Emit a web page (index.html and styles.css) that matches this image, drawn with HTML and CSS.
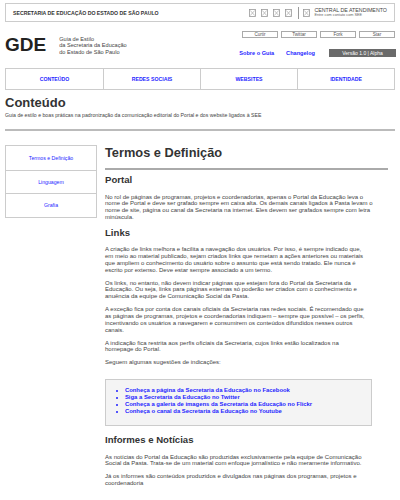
FILE: index.html
```html
<!DOCTYPE html>
<html lang="pt-BR">
<head>
<meta charset="utf-8">
<title>GDE - Guia de Estilo</title>
<link rel="stylesheet" href="styles.css">
</head>
<body>
<div class="page">
  <header class="topbar">
    <span class="org">SECRETARIA DE EDUCAÇÃO DO ESTADO DE SÃO PAULO</span>
    <div class="tools">
      <svg class="ico" viewBox="0 0 7 8"><rect x="0.5" y="0.5" width="6" height="7" fill="none" stroke="#999" stroke-width="0.8"/><path d="M1.2 1.4 L5.8 6.6 M5.8 1.4 L1.2 6.6" stroke="#aaa" stroke-width="0.7"/></svg>
      <svg class="ico" viewBox="0 0 7 8"><rect x="0.5" y="0.5" width="6" height="7" fill="none" stroke="#999" stroke-width="0.8"/><path d="M1.2 1.4 L5.8 6.6 M5.8 1.4 L1.2 6.6" stroke="#aaa" stroke-width="0.7"/></svg>
      <svg class="ico" viewBox="0 0 7 8"><rect x="0.5" y="0.5" width="6" height="7" fill="none" stroke="#999" stroke-width="0.8"/><path d="M1.2 1.4 L5.8 6.6 M5.8 1.4 L1.2 6.6" stroke="#aaa" stroke-width="0.7"/></svg>
      <svg class="ico" viewBox="0 0 7 8"><rect x="0.5" y="0.5" width="6" height="7" fill="none" stroke="#999" stroke-width="0.8"/><path d="M1.2 1.4 L5.8 6.6 M5.8 1.4 L1.2 6.6" stroke="#aaa" stroke-width="0.7"/></svg>
      <span class="sep"></span>
      <svg class="ico" viewBox="0 0 7 8"><rect x="0.5" y="0.5" width="6" height="7" fill="none" stroke="#999" stroke-width="0.8"/><path d="M1.2 1.4 L5.8 6.6 M5.8 1.4 L1.2 6.6" stroke="#aaa" stroke-width="0.7"/></svg>
      <div class="central">
        <span class="central-title">CENTRAL DE ATENDIMENTO</span>
        <span class="central-sub">Entre com contato com SEE</span>
      </div>
    </div>
  </header>

  <div class="brand-row">
    <div class="brand">
      <span class="logo">GDE</span>
      <span class="tagline">Guia de Estilo<br>da Secretaria da Educação<br>do Estado de São Paulo</span>
    </div>
    <div class="actions">
      <div class="buttons">
        <span class="btn">Curtir</span>
        <span class="btn">Twittar</span>
        <span class="btn">Fork</span>
        <span class="btn">Star</span>
      </div>
      <div class="meta">
        <a class="meta-link" href="#">Sobre o Guia</a>
        <a class="meta-link" href="#">Changelog</a>
        <span class="version">Versão 1.0 | Alpha</span>
      </div>
    </div>
  </div>

  <nav class="menu">
    <a href="#">CONTEÚDO</a>
    <a href="#">REDES SOCIAIS</a>
    <a href="#">WEBSITES</a>
    <a href="#">IDENTIDADE</a>
  </nav>

  <div class="title">
    <h1 class="page-title">Conteúdo</h1>
    <p class="subtitle">Guia de estilo e boas práticas na padronização da comunicação editorial do Portal e dos website ligados à SEE</p>
  </div>
  <hr class="rule">

  <div class="layout">
    <aside class="sidenav">
      <a href="#">Termos e Definição</a>
      <a href="#">Linguagem</a>
      <a href="#">Grafia</a>
    </aside>
    <main class="content">
      <h2 class="section-title">Termos e Definição</h2>
      <h3 class="first">Portal</h3>
      <p>No rol de páginas de programas, projetos e coordenadorias, apenas o Portal da Educação leva o<br>nome de Portal e deve ser grafado sempre em caixa alta. Os demais canais ligados à Pasta levam o<br>nome de site, página ou canal da Secretaria na internet. Eles devem ser grafados sempre com letra<br>minúscula.</p>
      <h3>Links</h3>
      <p>A criação de links melhora e facilita a navegação dos usuários. Por isso, é sempre indicado que,<br>em meio ao material publicado, sejam criados links que remetam a ações anteriores ou materiais<br>que ampliem o conhecimento do usuário sobre o assunto que está sendo tratado. Ele nunca é<br>escrito por extenso. Deve estar sempre associado a um termo.</p>
      <p>Os links, no entanto, não devem indicar páginas que estejam fora do Portal da Secretaria da<br>Educação. Ou seja, links para páginas externas só poderão ser criados com o conhecimento e<br>anuência da equipe de Comunicação Social da Pasta.</p>
      <p>A exceção fica por conta dos canais oficiais da Secretaria nas redes sociais. É recomendado que<br>as páginas de programas, projetos e coordenadorias indiquem – sempre que possível – os perfis,<br>incentivando os usuários a navegarem e consumirem os conteúdos difundidos nesses outros<br>canais.</p>
      <p>A indicação fica restrita aos perfis oficiais da Secretaria, cujos links estão localizados na<br>homepage do Portal.</p>
      <p>Seguem algumas sugestões de indicações:</p>
      <div class="linkbox">
        <ul>
          <li><a href="#">Conheça a página da Secretaria da Educação no Facebook</a></li>
          <li><a href="#">Siga a Secretaria da Educação no Twitter</a></li>
          <li><a href="#">Conheça a galeria de imagens da Secretaria da Educação no Flickr</a></li>
          <li><a href="#">Conheça o canal da Secretaria da Educação no Youtube</a></li>
        </ul>
      </div>
      <h3 class="after-box">Informes e Notícias</h3>
      <p>As notícias do Portal da Educação são produzidas exclusivamente pela equipe de Comunicação<br>Social da Pasta. Trata-se de um material com enfoque jornalístico e não meramente informativo.</p>
      <p>Já os informes são conteúdos produzidos e divulgados nas páginas dos programas, projetos e<br>coordenadoria</p>
    </main>
  </div>
</div>
</body>
</html>
```

FILE: styles.css
```css
* { box-sizing: border-box; }

html, body {
  margin: 0;
  padding: 0;
  background: #fff;
}

body {
  font-family: "Liberation Sans", Arial, sans-serif;
  color: #333;
}

a { text-decoration: none; color: #1f1fff; }

.page {
  padding: 3px 5px 0 5px;
}

/* top bar */
.topbar {
  height: 19px;
  border: 1px solid #ccc;
  display: flex;
  align-items: center;
  justify-content: space-between;
  padding: 0 7px 0 7px;
}

.org {
  font-size: 5.2px;
  font-weight: bold;
  color: #333;
}

.tools {
  display: flex;
  align-items: center;
}

.ico {
  width: 7px;
  height: 8px;
  margin-left: 5px;
  display: block;
}

.sep {
  width: 1px;
  height: 12px;
  background: #999;
  margin-left: 6px;
  margin-right: -1px;
}

.central {
  display: flex;
  flex-direction: column;
  margin-left: 4px;
  line-height: 4.6px;
  color: #444;
}

.central-title { font-size: 5.3px; }
.central-sub { font-size: 3.8px; color: #666; }

/* brand row */
.brand-row {
  display: flex;
  justify-content: space-between;
  align-items: flex-start;
  margin-top: 9px;
}

.brand {
  display: flex;
  align-items: flex-start;
  padding-top: 4px;
}

.logo {
  font-size: 19px;
  font-weight: bold;
  line-height: 19px;
  color: #222;
}

.tagline {
  font-size: 5.6px;
  line-height: 6.5px;
  color: #444;
  margin-left: 13px;
  margin-top: 0.5px;
}

.actions {
  display: flex;
  flex-direction: column;
  align-items: flex-end;
}

.buttons {
  display: flex;
  gap: 3px;
}

.btn {
  width: 36px;
  height: 7px;
  border: 1px solid #aaa;
  font-size: 4.6px;
  line-height: 5px;
  text-align: center;
  color: #555;
}

.meta {
  display: flex;
  align-items: center;
  margin-top: 11px;
}

.meta-link {
  font-size: 5.6px;
  font-weight: bold;
  margin-right: 12px;
}

.version {
  width: 67px;
  height: 8px;
  background: #6a6a6a;
  color: #fff;
  font-size: 5px;
  line-height: 8px;
  text-align: center;
  margin-left: 2px;
  margin-right: -1px;
}

/* menu */
.menu {
  display: grid;
  grid-template-columns: repeat(4, 1fr);
  height: 22px;
  border: 1px solid #ccc;
  margin-top: 11px;
}

.menu a {
  display: flex;
  align-items: center;
  justify-content: center;
  font-size: 5.2px;
  font-weight: bold;
  border-left: 1px solid #ccc;
}

.menu a:first-child { border-left: none; }

/* title */
.title {
  margin-top: 5px;
}

.page-title {
  margin: 0;
  font-size: 13px;
  line-height: 15px;
  color: #333;
}

.subtitle {
  margin: 2px 0 0 0;
  font-size: 5.2px;
  line-height: 6px;
  color: #444;
}

.rule {
  margin: 11px 0 0 0;
  border: none;
  height: 2px;
  background: #bbb;
}

/* body layout */
.layout {
  display: grid;
  grid-template-columns: 92px 283px;
  column-gap: 8px;
  margin-top: 14px;
}

.sidenav {
  align-self: start;
  border: 1px solid #ccc;
  display: flex;
  flex-direction: column;
}

.sidenav a {
  height: 23.5px;
  display: flex;
  align-items: center;
  justify-content: center;
  font-size: 5.2px;
  border-top: 1px solid #ccc;
}

.sidenav a:first-child { border-top: none; }

.content {
  color: #444;
}

.section-title {
  margin: 0;
  font-size: 12.8px;
  line-height: 15px;
  color: #333;
  padding-bottom: 8px;
  border-bottom: 2px solid #aaa;
}

.content h3 {
  margin: 6px 0 0 0;
  font-size: 9.6px;
  line-height: 11px;
  color: #333;
}

.content h3.first { margin-top: 4px; }

.content p {
  margin: 6.2px 0 0 0;
  font-size: 6px;
  line-height: 6.8px;
  white-space: nowrap;
}

.content h3 + p { margin-top: 8.5px; }

.linkbox {
  width: 267px;
  margin-top: 13px;
  border: 1px solid #ccc;
  background: #f4f4f4;
  padding: 7px 0 10px 10px;
}

.content h3.after-box { margin-top: 8px; }

.linkbox ul {
  margin: 0;
  padding: 0;
  list-style: disc inside;
  color: #1f1fff;
}

.linkbox li {
  font-size: 5.9px;
  line-height: 7px;
  font-weight: bold;
}

.linkbox a { color: #1f1fff; }
```
